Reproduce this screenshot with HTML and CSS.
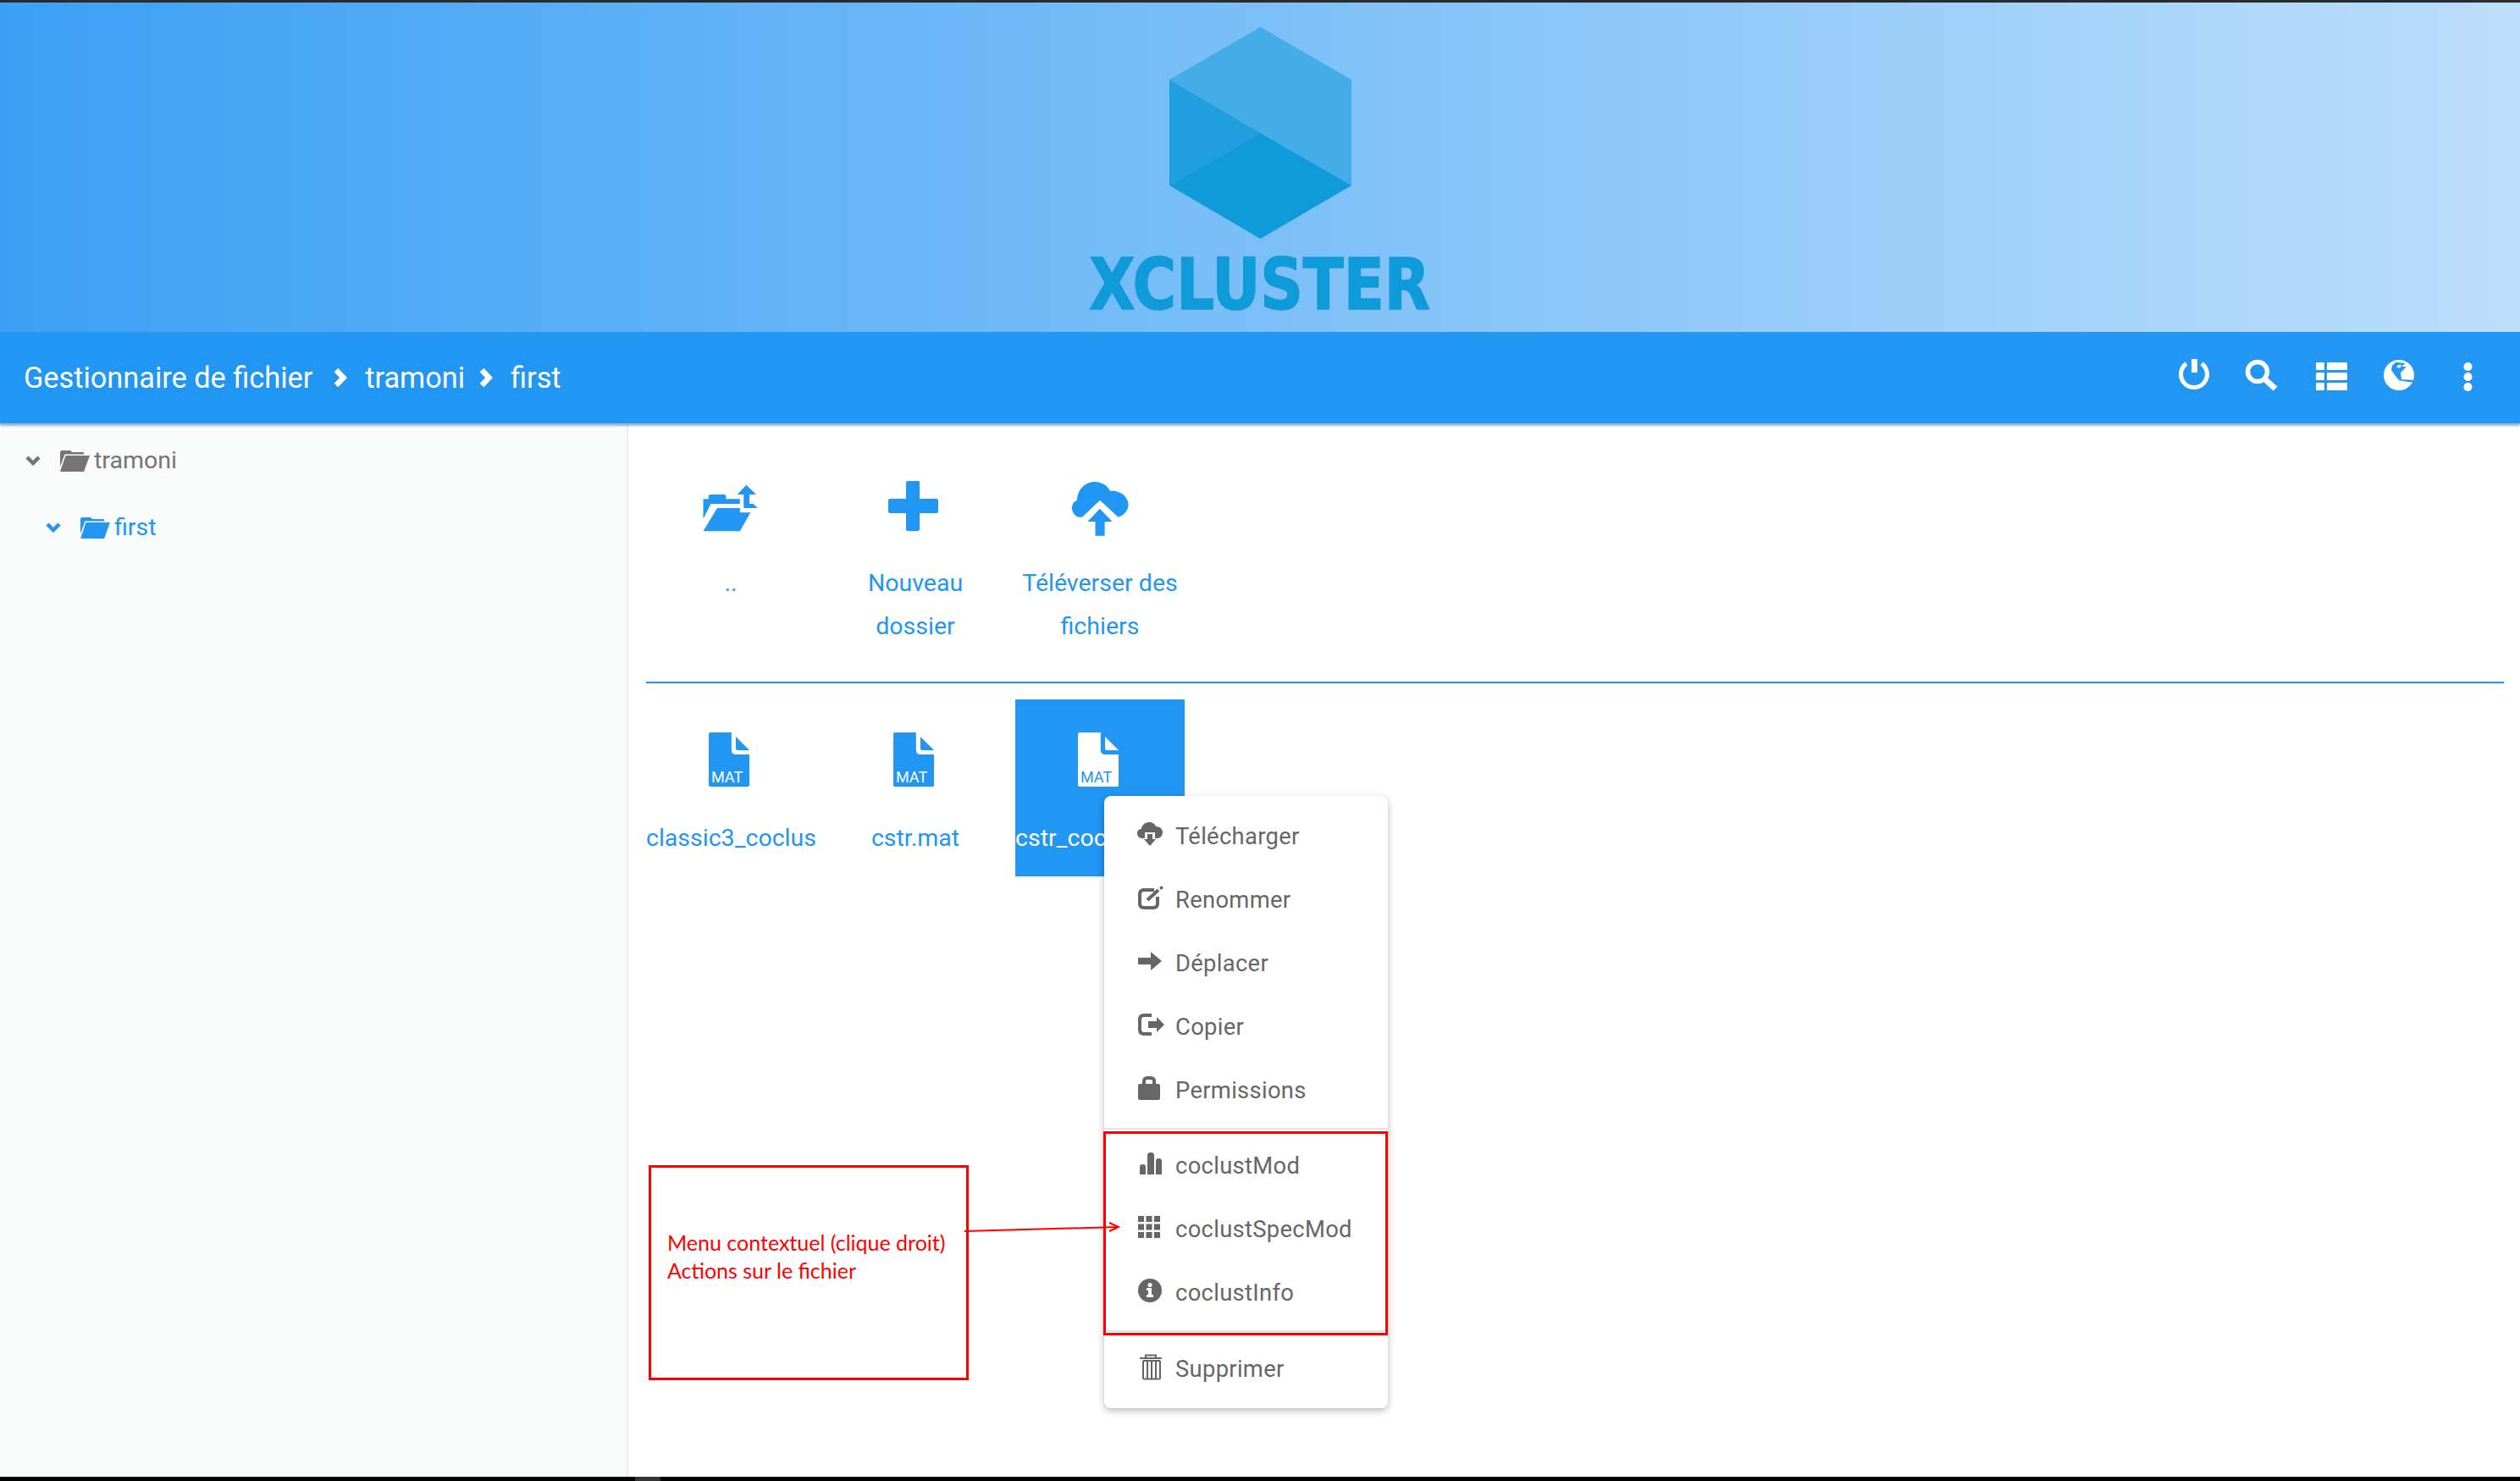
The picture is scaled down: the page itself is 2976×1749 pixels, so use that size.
FILE: index.html
```html
<!DOCTYPE html>
<html lang="fr">
<head>
<meta charset="utf-8">
<title>XCLUSTER</title>
<link rel="stylesheet" href="styles.css">
</head>
<body>
<div class="topline"></div>
<header class="banner">
  <svg class="hex" viewBox="0 0 215 250" width="215" height="250">
    <polygon points="0,62 107.500,0 215,62 215,187 107.500,125" fill="#44ace6"/>
    <polygon points="0,62 107.500,125 0,187" fill="#1f9fde"/>
    <polygon points="0,187 107.500,125 215,187 107.500,250" fill="#0f9ad9"/>
  </svg>
  <div class="wordmark">XCLUSTER</div>
</header>
<nav class="nav">
  <div class="crumbs">
    <span>Gestionnaire de fichier</span>
    <svg class="crumb-sep crumb-sep-first" viewBox="0 0 16 22" width="16" height="22"><path d="M3 2 L11.500 11 L3 20" fill="none" stroke="#fff" stroke-width="6.500"/></svg>
    <span>tramoni</span>
    <svg class="crumb-sep" viewBox="0 0 16 22" width="16" height="22"><path d="M3 2 L11.500 11 L3 20" fill="none" stroke="#fff" stroke-width="6.500"/></svg>
    <span>first</span>
  </div>
  <div class="nav-icons">
    <svg viewBox="0 0 40 40" width="40" height="40"><path d="M11 7.400 A15.500 15.500 0 1 0 29 7.400" fill="none" stroke="#fff" stroke-width="5"/><rect x="17" y="2" width="7" height="16" fill="#fff"/></svg>
    <svg viewBox="0 0 40 40" width="40" height="40"><circle cx="15" cy="17" r="11.500" fill="none" stroke="#fff" stroke-width="5.500"/><path d="M24 26 L36 37" stroke="#fff" stroke-width="7"/></svg>
    <svg viewBox="0 0 40 40" width="40" height="40"><g fill="#fff"><rect x="4" y="6" width="10" height="9" rx="1"/><rect x="17" y="6" width="24" height="9" rx="1"/><rect x="4" y="18" width="10" height="9" rx="1"/><rect x="17" y="18" width="24" height="9" rx="1"/><rect x="4" y="30" width="10" height="9" rx="1"/><rect x="17" y="30" width="24" height="9" rx="1"/></g></svg>
    <svg viewBox="0 0 40 40" width="40" height="40"><circle cx="22" cy="21" r="18" fill="#fff"/><path d="M18.300 5.700 L29.700 7 L25 10.700 L30.700 11.300 L24 18 L25 26.300 L34 26.500 L39.500 27 L39 29.500 L33 29 L22.300 27.300 L17.300 21.300 L13 14.700 L14 9.700Z" fill="#2196f3"/><path d="M20 9.500 L25 8.500 L23.500 12.500 L19.500 12Z" fill="#fff"/></svg>
    <svg viewBox="0 0 40 40" width="40" height="40"><g fill="#fff"><circle cx="23.500" cy="11" r="5"/><circle cx="23.500" cy="23" r="5"/><circle cx="23.500" cy="35" r="5"/></g></svg>
  </div>
</nav>
<main class="main">
  <aside class="sidebar">
    <div class="tree-row">
      <svg class="chev" viewBox="0 0 18 12" width="18" height="12"><path d="M2 2 L9 9 L16 2" fill="none" stroke="currentColor" stroke-width="4.500"/></svg>
      <svg class="tree-folder" viewBox="0 0 37 26" width="37" height="26"><path d="M1 20 V3 Q1 1 3 1 H13 L15 3 H29 V5.500 H6.500 Z" fill="currentColor"/><path d="M7.500 7 H36 L29 26 H1 Z" fill="currentColor"/></svg>
      <span>tramoni</span>
    </div>
    <div class="tree-row tree-row-sub">
      <svg class="chev" viewBox="0 0 18 12" width="18" height="12"><path d="M2 2 L9 9 L16 2" fill="none" stroke="currentColor" stroke-width="4.500"/></svg>
      <svg class="tree-folder" viewBox="0 0 37 26" width="37" height="26"><path d="M1 20 V3 Q1 1 3 1 H13 L15 3 H29 V5.500 H6.500 Z" fill="currentColor"/><path d="M7.500 7 H36 L29 26 H1 Z" fill="currentColor"/></svg>
      <span>first</span>
    </div>
  </aside>
  <section class="content">
    <div class="actions">
      <div class="action">
        <svg viewBox="0 0 70 70" width="70" height="70"><g fill="#2196f3"><path d="M2.500 47.700 V24.300 H8.800 V21 Q8.800 19 11 19 H27 Q29.300 19 29.300 21 V24.300 H45.800 V30 H11.500 Z"/><path d="M19 35 H45.800 V40.300 H58.300 L45.800 62.300 H2.500 Z"/><path d="M53.400 7.700 L65 19 H57 V30 H61.500 L66.800 35 H50.300 V19 H42.700 Z"/></g></svg>
        <div class="action-label">..</div>
      </div>
      <div class="action">
        <svg viewBox="0 0 70 70" width="70" height="70"><g fill="#2196f3"><rect x="3" y="24" width="59" height="17" rx="2"/><rect x="24" y="3" width="16" height="59" rx="2"/></g></svg>
        <div class="action-label">Nouveau dossier</div>
      </div>
      <div class="action">
        <svg viewBox="0 0 70 70" width="70" height="70"><g fill="#2196f3"><path d="M14 45.700 C6 47 2 40 2 35 C2 30 4 27 8 26 C8 14 17 4 29 4 C38 4 44 9 47 15 C50 14 53 14.500 56 16 C64 18 68.500 25 68.500 31 C68.500 38 63 44 56.500 45.700 L35 25.700 Z"/><path d="M34.800 35.700 L49.600 51 H40.600 V67.700 H29.500 V51 H20.500 Z"/></g></svg>
        <div class="action-label">Téléverser des fichiers</div>
      </div>
    </div>
    <hr class="divider">
    <div class="files">
      <div class="file">
        <svg viewBox="0 0 48 64" width="48" height="64"><path class="file-body" d="M2 0 H26.800 V20 Q26.800 26 32 26 H48 V62 Q48 64 46 64 H2 Q0 64 0 62 V2 Q0 0 2 0Z"/><path class="file-body" d="M32 5 L48 21 H34 Q32 21 32 19Z"/><text class="file-ext" x="3" y="59">MAT</text></svg>
        <div class="file-name">classic3_coclust.mat</div>
      </div>
      <div class="file">
        <svg viewBox="0 0 48 64" width="48" height="64"><path class="file-body" d="M2 0 H26.800 V20 Q26.800 26 32 26 H48 V62 Q48 64 46 64 H2 Q0 64 0 62 V2 Q0 0 2 0Z"/><path class="file-body" d="M32 5 L48 21 H34 Q32 21 32 19Z"/><text class="file-ext" x="3" y="59">MAT</text></svg>
        <div class="file-name">cstr.mat</div>
      </div>
      <div class="file file-selected">
        <svg viewBox="0 0 48 64" width="48" height="64"><path class="file-body" d="M2 0 H26.800 V20 Q26.800 26 32 26 H48 V62 Q48 64 46 64 H2 Q0 64 0 62 V2 Q0 0 2 0Z"/><path class="file-body" d="M32 5 L48 21 H34 Q32 21 32 19Z"/><text class="file-ext" x="3" y="59">MAT</text></svg>
        <div class="file-name">cstr_coclust.mat</div>
      </div>
    </div>
  </section>
</main>
<div class="bottombar"><div class="bottombar-tab"></div></div>

<ul class="menu">
  <li class="menu-item"><svg viewBox="0 0 32 32" width="32" height="32"><path d="M7 21 C3 21 1 18 1 15 C1 12 3 10 6 10 C6 6 10 2 15 2 C19 2 22 4 23 7 C28 7 31 10 31 14 C31 18 28 21 25 21 H22 V14 H10 V21Z"/><path d="M13 16 H19 V22 H23 L16 30 L9 22 H13Z"/></svg>Télécharger</li>
  <li class="menu-item"><svg viewBox="0 0 32 32" width="32" height="32"><path class="line" d="M21 7 H9 Q4 7 4 12 V23 Q4 28 9 28 H20 Q25 28 25 23 V15" stroke-width="4"/><path class="line" d="M13 19 L26 7" stroke-width="4"/><circle cx="29.500" cy="4.500" r="2"/></svg>Renommer</li>
  <li class="menu-item"><svg viewBox="0 0 32 32" width="32" height="32"><path d="M2 12 H17 V5 L30 16 L17 27 V20 H2Z"/></svg>Déplacer</li>
  <li class="menu-item"><svg viewBox="0 0 32 32" width="32" height="32"><path class="line" d="M18 5 H9 Q4 5 4 10 V22 Q4 27 9 27 H18" stroke-width="4"/><path d="M14 12 H24 V7 L33 16 L24 25 V20 H14Z"/></svg>Copier</li>
  <li class="menu-item"><svg viewBox="0 0 32 32" width="32" height="32"><path class="line" d="M9 13 V8 Q9 4 13 4 H17 Q21 4 21 8 V13" stroke-width="4"/><rect x="2" y="11" width="26" height="19" rx="2"/></svg>Permissions</li>
  <li class="menu-sep"></li>
  <li class="menu-item"><svg viewBox="0 0 32 32" width="32" height="32"><path d="M4 29 V20 Q4 17 7.500 17 Q11 17 11 20 V29Z"/><path d="M13 29 V6 Q13 3 17 3 Q21 3 21 6 V29Z"/><path d="M23 29 V13 Q23 10 26.500 10 Q30 10 30 13 V29Z"/></svg>coclustMod</li>
  <li class="menu-item"><svg viewBox="0 0 32 32" width="32" height="32"><rect x="2" y="3" width="7" height="7"/><rect x="11.500" y="3" width="7" height="7"/><rect x="21" y="3" width="7" height="7"/><rect x="2" y="12.500" width="7" height="7"/><rect x="11.500" y="12.500" width="7" height="7"/><rect x="21" y="12.500" width="7" height="7"/><rect x="2" y="22" width="7" height="7"/><rect x="11.500" y="22" width="7" height="7"/><rect x="21" y="22" width="7" height="7"/></svg>coclustSpecMod</li>
  <li class="menu-item"><svg viewBox="0 0 32 32" width="32" height="32"><circle cx="16" cy="16" r="14"/><circle cx="16" cy="9.500" r="2.500" fill="#fff"/><path d="M12 13 H18 V21 H20 V24 H12 V21 H14 V16 H12Z" fill="#fff"/></svg>coclustInfo</li>
  <li class="menu-sep"></li>
  <li class="menu-item"><svg viewBox="0 0 32 32" width="32" height="32"><path class="line" d="M4 6 H30 M11 6 V2.500 H23 V6" stroke-width="2"/><path class="line" d="M8 9 V29 Q8 30.500 9.500 30.500 H26.500 Q28 30.500 28 29 V9 M8 9 H28 M13 9 V30 M18 9 V30 M23 9 V30" stroke-width="2"/></svg>Supprimer</li>
</ul>

<div class="note-box">
  <p>Menu contextuel (clique droit)</p>
  <p>Actions sur le fichier</p>
</div>
<svg class="note-arrow" viewBox="0 0 186 20" width="186" height="20"><path d="M0 11 L181 6 M171 1 L182 6 L171 11" fill="none" stroke="#f00" stroke-width="2"/></svg>
<div class="note-frame"></div>
</body>
</html>
```
FILE: styles.css
```css
* { box-sizing: border-box; }
html, body { margin: 0; padding: 0; }
body {
  width: 2976px;
  height: 1749px;
  overflow: hidden;
  display: flex;
  flex-direction: column;
  position: relative;
  font-family: Roboto, "Liberation Sans", sans-serif;
  background: #fff;
}
.topline { height: 3px; background: #2b2b2b; flex: none; }
.banner {
  height: 389px;
  flex: none;
  display: flex;
  flex-direction: column;
  align-items: center;
  padding-top: 29px;
  background: linear-gradient(90deg, #3ba0f5 0%, #bcdefb 100%);
}
.hex { display: block; flex: none; }
.wordmark {
  margin-top: 12px;
  font-family: "DejaVu Sans Condensed", "DejaVu Sans", sans-serif;
  font-stretch: condensed;
  font-weight: 700;
  font-size: 84px;
  line-height: 84px;
  color: #0f9ad9;
  white-space: nowrap;
  transform: scaleX(.93);
  -webkit-text-stroke: 1.5px #0f9ad9;
}
.nav {
  height: 108px;
  flex: none;
  background: #2196f3;
  display: flex;
  align-items: center;
  justify-content: space-between;
  padding: 0 45px 0 28px;
  color: #fff;
  position: relative;
  z-index: 2;
  box-shadow: 0 3px 2px rgba(40, 100, 160, .45);
}
.crumbs { display: flex; align-items: center; font-size: 34.300px; }
.crumb-sep { margin: 0 21px 0 17px; flex: none; }
.crumb-sep-first { margin-left: 25px; }
.nav-icons { display: flex; gap: 40px; padding-bottom: 8px; }
.nav-icons svg { overflow: visible; display: block; }
.main { flex: 1; display: flex; min-height: 0; }
.sidebar {
  width: 742px;
  flex: none;
  background: #fafbfb;
  border-right: 2px solid #eceeef;
  padding: 4px 0 0 30px;
  color: #757575;
  font-size: 28.500px;
}
.tree-row {
  height: 79px;
  display: flex;
  align-items: center;
}
.tree-row-sub { margin-left: 24px; color: #2196f3; }
.chev { flex: none; margin-right: 22px; }
.tree-folder { flex: none; margin-right: 4px; }
.content { flex: 1; padding: 65px 19px 0 21px; min-width: 0; }
.actions, .files { display: flex; gap: 18px; }
.action { width: 200px; display: flex; flex-direction: column; align-items: center; }
.action svg { display: block; flex: none; }
.action-label {
  margin-top: 28px;
  font-size: 28.500px;
  line-height: 51px;
  color: #2196f3;
  text-align: center;
  width: 190px;
}
.divider { border: 0; border-top: 2px solid #2196f3; margin: 40px 0 19px; }
.file {
  width: 200px;
  height: 209px;
  padding-top: 39px;
  display: flex;
  flex-direction: column;
  align-items: center;
  color: #2196f3;
  overflow: hidden;
}
.file svg { display: block; flex: none; margin-right: 5px; }
.file-body { fill: #2196f3; }
.file-ext { fill: #fff; font-size: 18px; font-family: Roboto, sans-serif; }
.file-name {
  margin-top: 35px;
  font-size: 28.500px;
  line-height: 51px;
  white-space: nowrap;
  width: 200px;
  text-align: center;
  overflow: hidden;
}
.file-selected { background: #2196f3; color: #fff; }
.file-selected .file-body { fill: #fff; }
.file-selected .file-ext { fill: #2196f3; }
.bottombar { height: 5px; flex: none; background: #000; padding-left: 750px; }
.bottombar-tab { width: 30px; height: 5px; background: #333; }
.menu {
  position: absolute;
  left: 1304px;
  top: 940px;
  width: 335px;
  height: 723px;
  margin: 0;
  padding: 10px 0 0;
  list-style: none;
  background: #fff;
  border-radius: 8px;
  box-shadow: 0 3px 8px rgba(0, 0, 0, .28);
  z-index: 3;
}
.menu-item {
  height: 75px;
  display: flex;
  align-items: center;
  padding-left: 38px;
  font-size: 27.400px;
  color: #666;
  letter-spacing: .3px;
}
.menu-item svg { flex: none; margin: 0 14px 6px 0; fill: #666; overflow: visible; }
.menu-item .line { fill: none; stroke: #666; }
.menu-sep { height: 2px; margin: 6.500px 0 6px; background: #e4e4e4; }
.note-box {
  position: absolute;
  left: 766px;
  top: 1376px;
  width: 378px;
  height: 254px;
  border: 3px solid #f00;
  padding: 72px 0 0 19px;
  z-index: 4;
  font-family: Lato, "Open Sans", sans-serif;
  font-size: 25px;
  line-height: 33px;
  color: #f00;
}
.note-box p { margin: 0; white-space: nowrap; }
.note-arrow { position: absolute; left: 1139px; top: 1443px; z-index: 5; overflow: visible; }
.note-frame {
  position: absolute;
  left: 1303px;
  top: 1336px;
  width: 336px;
  height: 241px;
  border: 3px solid #f00;
  z-index: 4;
}
```
